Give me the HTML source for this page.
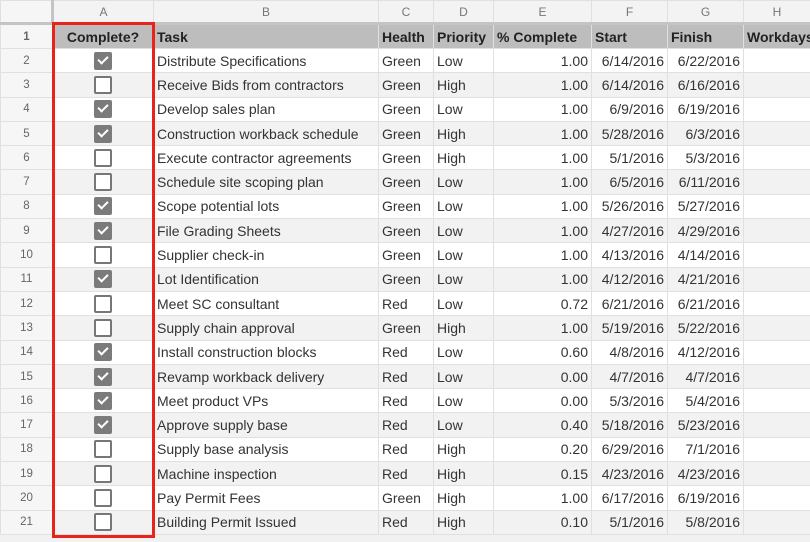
<!DOCTYPE html>
<html><head><style>
body{margin:0;width:810px;height:542px;overflow:hidden;background:#f1f1f1;font-family:"Liberation Sans",sans-serif;position:relative}
table{position:absolute;left:0;top:0;border-collapse:collapse;table-layout:fixed;width:810px}
td{height:23.3px;border:1px solid #e0e0e0;padding:0 3px;font-size:14px;color:#333;white-space:nowrap;overflow:hidden;background:#fff}
tr.h td{height:21px;background:#f3f3f3;color:#777;text-align:center;font-size:12px;border-bottom:3px solid #c4c4c4}
tr.t td{background:#bdbdbd!important;font-weight:bold;color:#222;height:23px}
tr:nth-child(even) td{background:#f2f2f2}
tr td:first-child{background:#f6f6f6!important;color:#666;text-align:center;font-size:11.5px}
tr.h td:first-child{border-right:3px solid #c4c4c4}
.r{text-align:right}
.cb{display:block;margin:0 auto;width:14px;height:14px;border:2px solid #777;border-radius:2px;background:#fff;position:relative}
.on{background:#7b7b7b;border-color:#7b7b7b}
.on:after{content:"";position:absolute;left:4px;top:0px;width:4px;height:8px;border:solid #fff;border-width:0 2px 2px 0;transform:rotate(45deg)}
#box{position:absolute;left:52px;top:22px;width:97px;height:510px;border:3px solid #e8241a}
</style></head><body>
<table>
<colgroup><col style="width:52px"><col style="width:101px"><col style="width:225px"><col style="width:55px"><col style="width:60px"><col style="width:98px"><col style="width:76px"><col style="width:76px"><col style="width:67px"></colgroup>
<tr class="h"><td></td><td>A</td><td>B</td><td>C</td><td>D</td><td>E</td><td>F</td><td>G</td><td>H</td></tr>
<tr class="t"><td>1</td><td style="text-align:center">Complete?</td><td>Task</td><td>Health</td><td>Priority</td><td>% Complete</td><td>Start</td><td>Finish</td><td>Workdays</td></tr>
<tr><td>2</td><td><span class="cb on"></span></td><td>Distribute Specifications</td><td>Green</td><td>Low</td><td class="r">1.00</td><td class="r">6/14/2016</td><td class="r">6/22/2016</td><td></td></tr>
<tr><td>3</td><td><span class="cb"></span></td><td>Receive Bids from contractors</td><td>Green</td><td>High</td><td class="r">1.00</td><td class="r">6/14/2016</td><td class="r">6/16/2016</td><td></td></tr>
<tr><td>4</td><td><span class="cb on"></span></td><td>Develop sales plan</td><td>Green</td><td>Low</td><td class="r">1.00</td><td class="r">6/9/2016</td><td class="r">6/19/2016</td><td></td></tr>
<tr><td>5</td><td><span class="cb on"></span></td><td>Construction workback schedule</td><td>Green</td><td>High</td><td class="r">1.00</td><td class="r">5/28/2016</td><td class="r">6/3/2016</td><td></td></tr>
<tr><td>6</td><td><span class="cb"></span></td><td>Execute contractor agreements</td><td>Green</td><td>High</td><td class="r">1.00</td><td class="r">5/1/2016</td><td class="r">5/3/2016</td><td></td></tr>
<tr><td>7</td><td><span class="cb"></span></td><td>Schedule site scoping plan</td><td>Green</td><td>Low</td><td class="r">1.00</td><td class="r">6/5/2016</td><td class="r">6/11/2016</td><td></td></tr>
<tr><td>8</td><td><span class="cb on"></span></td><td>Scope potential lots</td><td>Green</td><td>Low</td><td class="r">1.00</td><td class="r">5/26/2016</td><td class="r">5/27/2016</td><td></td></tr>
<tr><td>9</td><td><span class="cb on"></span></td><td>File Grading Sheets</td><td>Green</td><td>Low</td><td class="r">1.00</td><td class="r">4/27/2016</td><td class="r">4/29/2016</td><td></td></tr>
<tr><td>10</td><td><span class="cb"></span></td><td>Supplier check-in</td><td>Green</td><td>Low</td><td class="r">1.00</td><td class="r">4/13/2016</td><td class="r">4/14/2016</td><td></td></tr>
<tr><td>11</td><td><span class="cb on"></span></td><td>Lot Identification</td><td>Green</td><td>Low</td><td class="r">1.00</td><td class="r">4/12/2016</td><td class="r">4/21/2016</td><td></td></tr>
<tr><td>12</td><td><span class="cb"></span></td><td>Meet SC consultant</td><td>Red</td><td>Low</td><td class="r">0.72</td><td class="r">6/21/2016</td><td class="r">6/21/2016</td><td></td></tr>
<tr><td>13</td><td><span class="cb"></span></td><td>Supply chain approval</td><td>Green</td><td>High</td><td class="r">1.00</td><td class="r">5/19/2016</td><td class="r">5/22/2016</td><td></td></tr>
<tr><td>14</td><td><span class="cb on"></span></td><td>Install construction blocks</td><td>Red</td><td>Low</td><td class="r">0.60</td><td class="r">4/8/2016</td><td class="r">4/12/2016</td><td></td></tr>
<tr><td>15</td><td><span class="cb on"></span></td><td>Revamp workback delivery</td><td>Red</td><td>Low</td><td class="r">0.00</td><td class="r">4/7/2016</td><td class="r">4/7/2016</td><td></td></tr>
<tr><td>16</td><td><span class="cb on"></span></td><td>Meet product VPs</td><td>Red</td><td>Low</td><td class="r">0.00</td><td class="r">5/3/2016</td><td class="r">5/4/2016</td><td></td></tr>
<tr><td>17</td><td><span class="cb on"></span></td><td>Approve supply base</td><td>Red</td><td>Low</td><td class="r">0.40</td><td class="r">5/18/2016</td><td class="r">5/23/2016</td><td></td></tr>
<tr><td>18</td><td><span class="cb"></span></td><td>Supply base analysis</td><td>Red</td><td>High</td><td class="r">0.20</td><td class="r">6/29/2016</td><td class="r">7/1/2016</td><td></td></tr>
<tr><td>19</td><td><span class="cb"></span></td><td>Machine inspection</td><td>Red</td><td>High</td><td class="r">0.15</td><td class="r">4/23/2016</td><td class="r">4/23/2016</td><td></td></tr>
<tr><td>20</td><td><span class="cb"></span></td><td>Pay Permit Fees</td><td>Green</td><td>High</td><td class="r">1.00</td><td class="r">6/17/2016</td><td class="r">6/19/2016</td><td></td></tr>
<tr><td>21</td><td><span class="cb"></span></td><td>Building Permit Issued</td><td>Red</td><td>High</td><td class="r">0.10</td><td class="r">5/1/2016</td><td class="r">5/8/2016</td><td></td></tr>
</table>
<div id="box"></div>
</body></html>
